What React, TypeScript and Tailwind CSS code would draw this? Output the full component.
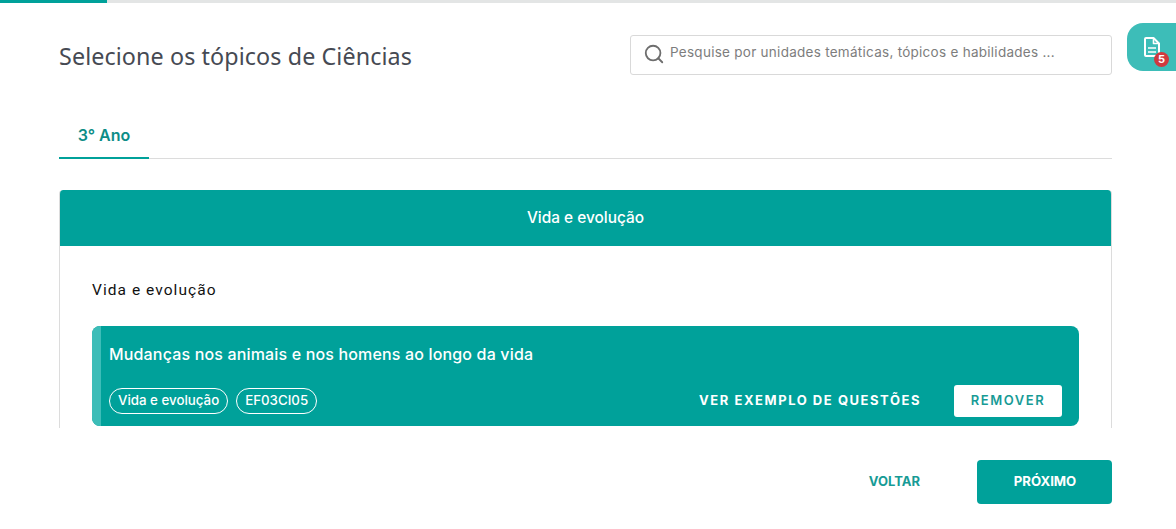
import React from "react";
import { Search } from "lucide-react";

const rubik = "font-['Inter','Roboto',sans-serif]";

export default function App() {
  return (
    <div className={`relative h-[529px] w-full overflow-hidden bg-white ${rubik}`}>
      <div className="h-[3px] w-full bg-[#e3e5e5]">
        <div className="h-[3px] w-[107px] bg-[#00a19a]" />
      </div>

      <div className="absolute right-0 top-[23px] flex h-[48px] w-[49px] items-center rounded-l-[16px] bg-[#3dbdb8] pl-[17px]">
        <div className="relative h-[20px] w-[16px]">
          <svg width="16" height="20" viewBox="0 0 16 20" fill="none" stroke="white" strokeWidth="2" strokeLinejoin="round" className="block">
            <path d="M1 2a1 1 0 0 1 1-1h7.5L15 6.5V18a1 1 0 0 1-1 1H2a1 1 0 0 1-1-1z" />
            <path d="M9.5 1v5.5H15" strokeWidth="1.6" />
            <path d="M4 11h8M4 15h8" strokeWidth="1.6" />
          </svg>
          <span className="absolute left-[10px] top-[15px] flex h-[15px] w-[15px] items-center justify-center rounded-full bg-[#d0393e] text-[11px] font-bold leading-none text-white">5</span>
        </div>
      </div>

      <div className="ml-[59px] w-[1053px]">
        <div className="mt-[32px] flex h-[40px] items-center justify-between">
          <h1 className="pt-[3px] font-['Noto_Sans',sans-serif] text-[23.3px] font-normal tracking-[0.1px] text-[#464a53]">Selecione os tópicos de Ciências</h1>
          <div className="flex h-[40px] w-[482px] items-center rounded-[3px] border border-[#d9d9d9] pl-[12px]">
            <Search className="-mt-[2px] h-[22px] w-[22px] text-[#6e6e6e]" strokeWidth={2} />
            <span className="ml-[5px] pb-[6px] text-[13.5px] tracking-[0.27px] text-[#7d7d7d]">Pesquise por unidades temáticas, tópicos e habilidades ...</span>
          </div>
        </div>

        <div className="mt-[41px] h-[43px] border-b border-[#dcdcdc]">
          <div className="flex h-[43px] w-[90px] items-center justify-center border-b-2 border-[#00a19a] pb-[4px] text-[16px] font-semibold text-[#0d8d87]">3° Ano</div>
        </div>

        <div className="mt-[31px] h-[238px] overflow-hidden rounded-t-[4px] border-x border-[#dcdcdc]">
          <div className="-mx-px flex h-[56px] items-center justify-center rounded-t-[4px] bg-[#00a19a] text-[15.4px] font-medium text-white">Vida e evolução</div>
          <p className="ml-[32px] mt-[34px] font-['Roboto',sans-serif] text-[15.5px] leading-[20px] tracking-[1.05px] text-[#111]">Vida e evolução</p>
          <div className="ml-[32px] mt-[26px] flex h-[100px] w-[987px] overflow-hidden rounded-[8px] bg-[#00a19a]">
            <div className="w-[9px] bg-[#3dbdb8]" />
            <div className="flex-1 pl-[8px] pr-[17px]">
              <p className="mt-[18px] text-[16px] font-medium leading-[20px] tracking-[0.16px] text-white">Mudanças nos animais e nos homens ao longo da vida</p>
              <div className="mt-[21px] flex items-center justify-between">
                <div className="flex gap-[8px]">
                  <span className="flex h-[26px] items-center rounded-full border border-white pl-[8px] pr-[8px] text-[13.3px] font-medium text-white">Vida e evolução</span>
                  <span className="flex h-[26px] items-center rounded-full border border-white pl-[8px] pr-[8px] text-[13.3px] font-medium text-white">EF03CI05</span>
                </div>
                <div className="flex items-center gap-[33px]">
                  <span className="text-[13px] font-bold tracking-[1.55px] text-white">VER EXEMPLO DE QUESTÕES</span>
                  <span className="flex h-[32px] w-[108px] items-center justify-center rounded-[3px] bg-white text-[13px] font-semibold tracking-[1.55px] text-[#179b96]">REMOVER</span>
                </div>
              </div>
            </div>
          </div>
        </div>

        <div className="mt-[32px] flex items-center justify-end">
          <span className="mr-[57px] text-[13px] font-bold text-[#179b96]">VOLTAR</span>
          <span className="flex h-[44px] w-[135px] items-center justify-center rounded-[4px] bg-[#00a19a] pl-px text-[13.2px] font-bold text-white">PRÓXIMO</span>
        </div>
      </div>
    </div>
  );
}
